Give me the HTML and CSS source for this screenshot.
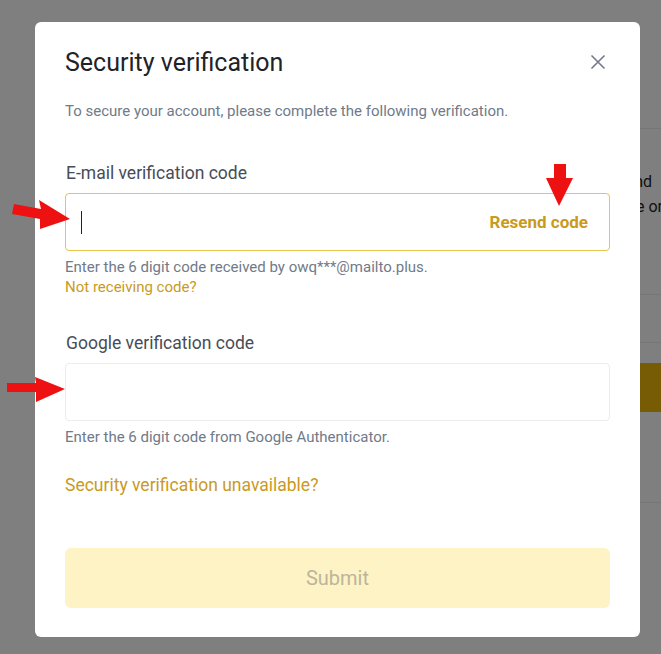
FILE: index.html
```html
<!DOCTYPE html>
<html lang="en">

<head>
    <meta charset="UTF-8">
    <meta name="viewport" content="width=device-width, initial-scale=1.0">
    <title>Security verification</title>
    <link rel="stylesheet" href="styles.css">
</head>

<body>
    <!-- page behind the dialog, only its right edge shows -->
    <div class="page">
        <div class="page-panel">
            <div class="page-rule first"></div>
            <div class="page-text">
                <div class="page-line">Verify your identity and</div>
                <div class="page-line wide">Please bind one or</div>
            </div>
            <div class="page-rule gap-a"></div>
            <div class="page-rule gap-b"></div>
            <div class="page-button"></div>
            <div class="page-rule gap-c"></div>
        </div>
    </div>

    <div class="overlay">
        <div class="modal">
            <div class="modal-header">
                <h1>Security verification</h1>
                <button class="close" aria-label="Close">
                    <svg width="24" height="24" viewBox="0 0 24 24">
                        <path d="M5.5 5.5L18.5 18.5M18.5 5.5L5.5 18.5" stroke="#707a8a" stroke-width="1.6" fill="none" />
                    </svg>
                </button>
            </div>
            <p class="intro">To secure your account, please complete the following verification.</p>

            <label class="label first">E-mail verification code</label>
            <div class="field active">
                <span class="caret"></span>
                <span class="resend">Resend code</span>
            </div>
            <div class="hint">Enter the 6 digit code received by owq***@mailto.plus.</div>
            <a class="link small" href="#">Not receiving code?</a>

            <label class="label second">Google verification code</label>
            <div class="field"></div>
            <div class="hint">Enter the 6 digit code from Google Authenticator.</div>

            <a class="link big" href="#">Security verification unavailable?</a>

            <button class="submit" disabled>Submit</button>
        </div>
    </div>

    <!-- red arrows drawn on top of the screenshot -->
    <svg class="marks" width="661" height="654" viewBox="0 0 661 654">
        <polygon points="14,204 41,209 39,200 70,219 40,229 40,219 12,214" fill="#ee1111" />
        <polygon points="7,383 36,383 35,377 65,389 36,402 36,392 7,392" fill="#ee1111" />
        <polygon points="554,164 566,164 566,178 573,178 559,206 546,178 554,178" fill="#ee1111" />
    </svg>
</body>

</html>
```

FILE: styles.css
```css
body {
    margin: 0;
    font-family: Roboto, "Liberation Sans", sans-serif;
    background-color: #ffffff;
    overflow: hidden;
}

.page {
    height: 654px;
    display: flex;
    justify-content: flex-end;
}

.page-panel {
    width: 240px;
    display: flex;
    flex-direction: column;
}

.page-rule {
    border-top: 1px solid #eaecef;
}

.page-rule.first {
    margin-top: 128px;
}

.page-text {
    margin-top: 40px;
    font-size: 16px;
    line-height: 25px;
    color: #1e2329;
}

.page-line {
    text-align: right;
    padding-right: 9px;
    white-space: nowrap;
}

.page-line.wide {
    padding-right: 0;
    margin-right: -2px;
}

.page-rule.gap-a {
    margin-top: 75px;
}

.page-rule.gap-b {
    margin-top: 47px;
}

.page-button {
    margin-top: 20px;
    height: 49px;
    background-color: #f0b90b;
}

.page-rule.gap-c {
    margin-top: 90px;
}

.overlay {
    position: fixed;
    top: 0;
    left: 0;
    right: 0;
    bottom: 0;
    background-color: rgba(0, 0, 0, 0.5);
    padding: 22px 0 0 35px;
}

.modal {
    width: 605px;
    box-sizing: border-box;
    padding: 24px 30px 29px;
    background-color: white;
    border-radius: 6px;
    display: flex;
    flex-direction: column;
}

.modal-header {
    height: 32px;
    display: flex;
    align-items: center;
    justify-content: space-between;
}

h1 {
    margin: 0;
    font-size: 25px;
    font-weight: 400;
    color: #1e2329;
}

.close {
    width: 24px;
    height: 24px;
    padding: 0;
    border: none;
    background: none;
    display: flex;
}

.intro {
    margin: 23px 0 0;
    font-size: 15px;
    line-height: 20px;
    color: #707a8a;
}

.label {
    display: block;
    font-size: 17.5px;
    line-height: 24px;
    color: #474d57;
    padding-left: 1px;
}

.label.first {
    margin-top: 40px;
}

.label.second {
    margin-top: 34px;
}

.field {
    margin-top: 8px;
    height: 58px;
    box-sizing: border-box;
    border: 1px solid #eaecef;
    border-radius: 4px;
    display: flex;
    align-items: center;
    padding: 0 21px 0 15px;
}

.field.active {
    border-color: #e8c44c;
}

.caret {
    width: 1px;
    height: 23px;
    background-color: #1e2329;
}

.resend {
    margin-left: auto;
    font-size: 17px;
    font-weight: 700;
    color: #c99a1e;
}

.hint {
    margin-top: 6px;
    font-size: 15px;
    line-height: 20px;
    color: #707a8a;
}

.link {
    text-decoration: none;
    color: #c99a1e;
    align-self: flex-start;
}

.link.small {
    font-size: 15px;
    line-height: 20px;
}

.link.big {
    margin-top: 26px;
    font-size: 17.5px;
    line-height: 24px;
}

.submit {
    margin-top: 51px;
    height: 60px;
    border: none;
    border-radius: 6px;
    background-color: #fdf3c5;
    color: #bcb59b;
    font-family: Roboto, "Liberation Sans", sans-serif;
    font-size: 20px;
}

.marks {
    position: fixed;
    top: 0;
    left: 0;
    pointer-events: none;
}
```
